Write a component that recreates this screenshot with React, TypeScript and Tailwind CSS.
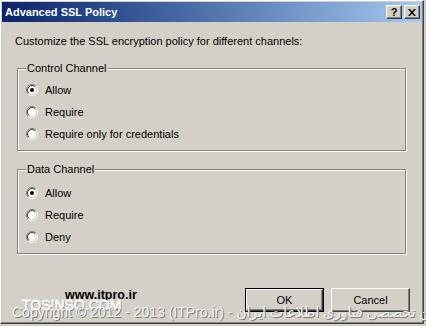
import React from 'react'

const font = "font-['Liberation_Sans','DejaVu_Sans',sans-serif]"

function Radio({ checked }: { checked?: boolean }) {
  return (
    <svg width="12" height="12" viewBox="0 0 12 12" className="shrink-0">
      <circle cx="6" cy="6" r="4.2" fill="#fff" />
      <path d="M2.11 9.89A5.5 5.5 0 0 1 9.89 2.11" stroke="#808080" fill="none" />
      <path d="M9.89 2.11A5.5 5.5 0 0 1 2.11 9.89" stroke="#fff" fill="none" />
      <path d="M2.82 9.18A4.5 4.5 0 0 1 9.18 2.82" stroke="#404040" fill="none" />
      <path d="M9.18 2.82A4.5 4.5 0 0 1 2.82 9.18" stroke="#d4d0c8" fill="none" />
      {checked && <circle cx="6" cy="6" r="2" fill="#000" />}
    </svg>
  )
}

function Group({ title, options, className }: { title: string; options: string[]; className: string }) {
  return (
    <div
      className={`relative ml-[2px] w-[389px] border border-[#808080] pl-[8px] shadow-[inset_1px_1px_0_#fff,1px_1px_0_#fff] ${className}`}
    >
      {/* legend sits on the etched border */}
      <span className="absolute left-[8px] top-[-8px] bg-[#d4d0c8] px-[1px] leading-[14px]">{title}</span>
      {options.map((o, i) => (
        <div key={o} className="flex h-[22px] items-center gap-[7px]">
          <Radio checked={i === 0} />
          <span className="leading-[14px]">{o}</span>
        </div>
      ))}
    </div>
  )
}

function CaptionButton({ children }: { children: React.ReactNode }) {
  return (
    <div className="flex h-[14px] w-[16px] items-center justify-center border border-b-[#404040] border-l-white border-r-[#404040] border-t-white bg-[#d4d0c8] shadow-[inset_-1px_-1px_0_#808080]">
      {children}
    </div>
  )
}

function Button({ label, primary }: { label: string; primary?: boolean }) {
  const face = (
    <div className="flex h-full w-full items-center justify-center border border-b-[#404040] border-l-white border-r-[#404040] border-t-white shadow-[inset_-1px_-1px_0_#808080]">
      {label}
    </div>
  )
  return primary ? (
    <div className="h-[24px] w-[79px] border border-black">{face}</div>
  ) : (
    <div className="h-[24px] w-[79px]">{face}</div>
  )
}

export default function App() {
  return (
    <div className={`relative h-[326px] w-[426px] overflow-hidden bg-[#d4d0c8] text-[11px] text-black ${font}`}>
      <div className="flex h-[324px] w-[424px] flex-col border border-b-[#404040] border-l-white border-r-[#404040] border-t-white p-[1px] shadow-[inset_-1px_-1px_0_#808080]">
        {/* Title bar */}
        <div className="flex h-[20px] items-center justify-between bg-linear-to-r from-[#0a246a] to-[#a6caf0] pl-[3px] pr-[2px]">
          <span className="text-[11px] font-bold text-white">Advanced SSL Policy</span>
          <div className="flex gap-[2px]">
            <CaptionButton>
              <span className="text-[11px] font-bold leading-none">?</span>
            </CaptionButton>
            <CaptionButton>
              <svg width="8" height="7" viewBox="0 0 8 7">
                <path d="M0 0h2l2 2.5L6 0h2L5 3.5 8 7H6L4 4.5 2 7H0l3-3.5z" fill="#000" />
              </svg>
            </CaptionButton>
          </div>
        </div>

        {/* Body */}
        <div className="flex flex-1 flex-col pl-[13px] pr-[12px]">
          <p className="mt-[12px] leading-[14px]">Customize the SSL encryption policy for different channels:</p>

          <Group
            title="Control Channel"
            options={['Allow', 'Require', 'Require only for credentials']}
            className="mt-[20px] h-[83px] pt-[10px]"
          />
          <Group
            title="Data Channel"
            options={['Allow', 'Require', 'Deny']}
            className="mt-[18px] h-[85px] pt-[12px]"
          />

          <div className="mt-[34px] flex items-start">
            <span className="ml-[50px] text-[12.5px] font-bold leading-[15px]">www.itpro.ir</span>
            <div className="ml-auto flex gap-[7px]">
              <Button label="OK" primary />
              <Button label="Cancel" />
            </div>
          </div>
        </div>
      </div>

      {/* Watermark overlay */}
      <span className="pointer-events-none absolute left-[22px] top-[297px] whitespace-nowrap text-[14px] leading-[16px] text-[#d4d0c8] [-webkit-text-stroke:0.8px_#ffffff] [text-shadow:1px_1px_0_#808080]">
        TOSINSO.COM
      </span>
      <span className="pointer-events-none absolute left-[12px] top-[304px] whitespace-nowrap text-[14px] leading-[16px] text-[#f2f2f2] [text-shadow:1px_1px_0_#7a7a7a]">
        Copyright © 2012 - 2013 (ITPro.ir) - انجمن تخصصی فناوری اطلاعات ایران
      </span>
    </div>
  )
}
